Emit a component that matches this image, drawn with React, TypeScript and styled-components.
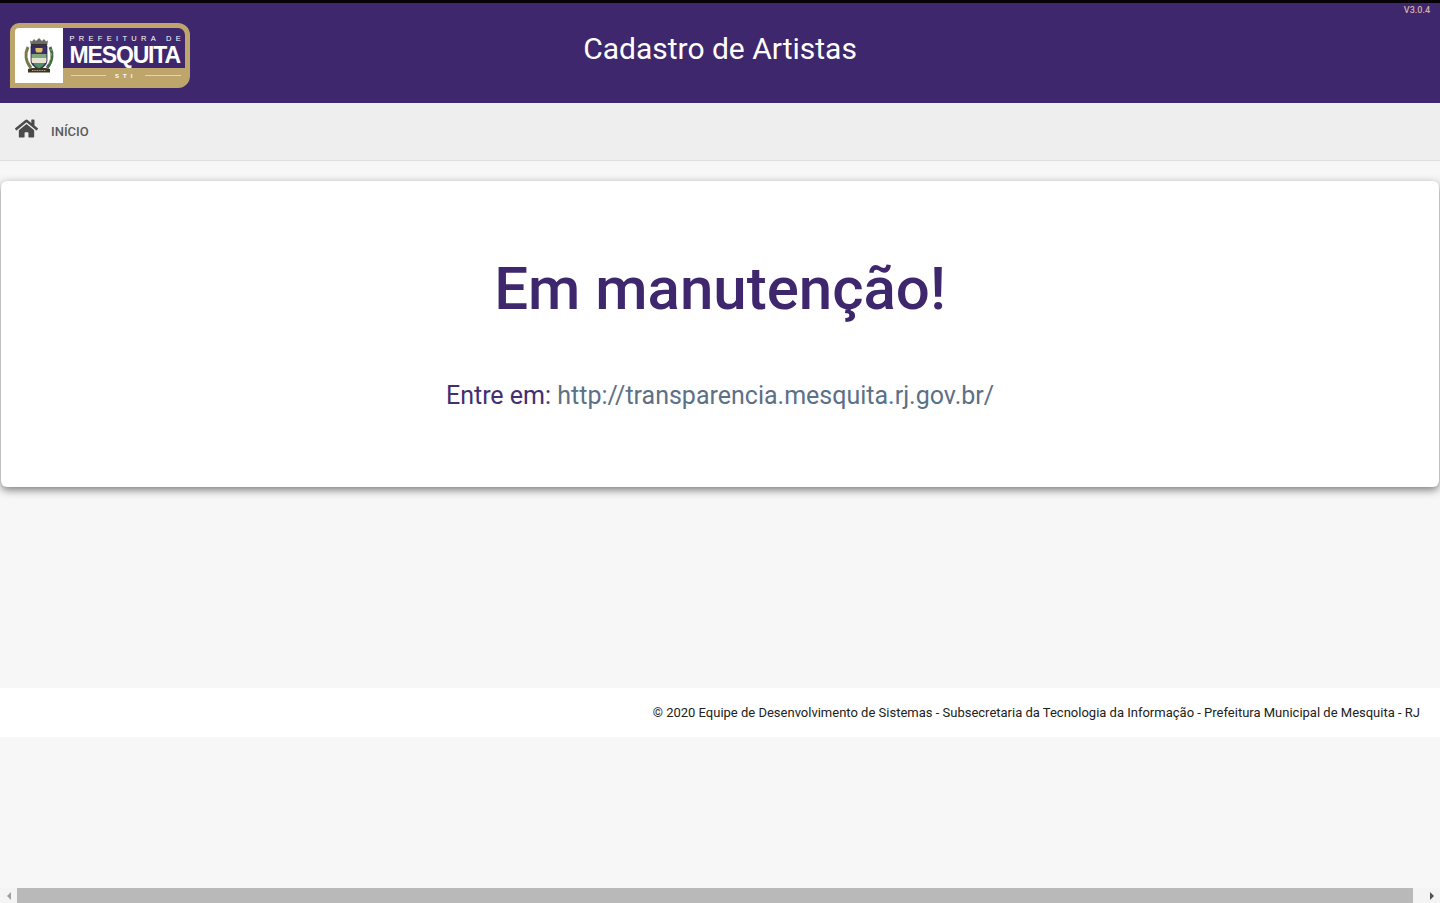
import React from 'react'
import styled, { createGlobalStyle } from 'styled-components'
import { FaHome } from 'react-icons/fa'

const Global = createGlobalStyle`
  html, body {
    margin: 0;
    padding: 0;
    background: #f7f7f7;
    font-family: Roboto, 'Liberation Sans', sans-serif;
    overflow: hidden;
  }
`

const Page = styled.div`
  display: flex;
  flex-direction: column;
  height: 903px;
  box-sizing: border-box;
`

const Header = styled.header`
  position: relative;
  display: flex;
  align-items: center;
  justify-content: center;
  height: 100px;
  flex-shrink: 0;
  border-top: 3px solid #060308;
  background: #3e276c;
`

const Version = styled.span`
  position: absolute;
  top: 2px;
  right: 10px;
  color: #d8b0a8;
  font-size: 9px;
  font-weight: 500;
`

const Title = styled.h1`
  margin: 0 0 8px;
  color: #fff;
  font-size: 30px;
  font-weight: 400;
  line-height: 36px;
`

const Logo = styled.div`
  position: absolute;
  left: 10px;
  top: 20px;
  display: flex;
  width: 180px;
  height: 65px;
  box-sizing: border-box;
  border: 5px solid #bea56c;
  border-radius: 9px 12px 12px 0;
  overflow: hidden;
  background: #bea56c;
`

const Crest = styled.div`
  display: flex;
  align-items: center;
  justify-content: center;
  width: 48px;
  background: #fff;
`

const LogoBody = styled.div`
  display: flex;
  flex: 1;
  flex-direction: column;
`

const LogoTop = styled.div`
  display: flex;
  flex-direction: column;
  height: 40px;
  box-sizing: border-box;
  padding: 7px 0 0 7px;
  background: #3e276c;
  color: #fff;
`

const LogoSmall = styled.span`
  font-family: 'Liberation Sans', sans-serif;
  font-size: 7.5px;
  line-height: 8px;
  letter-spacing: 4.3px;
  white-space: nowrap;
`

const LogoBig = styled.span`
  font-family: 'Liberation Sans', sans-serif;
  font-size: 23px;
  font-weight: 700;
  line-height: 24px;
  letter-spacing: -1.15px;
  white-space: nowrap;
`

const LogoBottom = styled.div`
  display: flex;
  flex: 1;
  align-items: center;
  gap: 9px;
  padding: 0 4px 0 8px;
  color: #fff;
  font-family: 'Liberation Sans', sans-serif;
  font-size: 6px;
  font-weight: 700;
  letter-spacing: 4px;
`

const LogoRule = styled.i`
  flex: 1;
  height: 1px;
  background: #e4d6ac;
`

const Nav = styled.nav`
  display: flex;
  align-items: center;
  gap: 13px;
  height: 57px;
  flex-shrink: 0;
  padding-left: 15px;
  background: #eeeeee;
  border-bottom: 1px solid #dedede;
  color: #4a4a4a;

  svg {
    margin-top: -6px;
  }
`

const NavLabel = styled.span`
  font-size: 13px;
  font-weight: 500;
  color: #5a5a5a;
`

const Card = styled.main`
  display: flex;
  flex-direction: column;
  align-items: center;
  height: 306px;
  flex-shrink: 0;
  margin: 20px 1px 0;
  box-sizing: border-box;
  background: #fff;
  border-radius: 6px;
  box-shadow: 0 3px 8px rgba(0, 0, 0, 0.5);
`

const Heading = styled.h2`
  margin: 72px 0 0;
  color: #3e276c;
  font-size: 60px;
  font-weight: 500;
  line-height: 72px;
`

const Sub = styled.p`
  margin: 56px 0 0;
  color: #432f70;
  font-size: 25px;
  line-height: 30px;
`

const SubLink = styled.a`
  color: #5c7086;
  text-decoration: none;
`

const Footer = styled.footer`
  display: flex;
  align-items: center;
  justify-content: flex-end;
  height: 49px;
  flex-shrink: 0;
  margin-top: 201px;
  padding-right: 20px;
  background: #fff;
  color: #212121;
  font-size: 13px;
`

const Spacer = styled.div`
  flex: 1;
`

const ScrollBar = styled.div`
  display: flex;
  align-items: center;
  height: 15px;
  flex-shrink: 0;
  background: #f4f4f4;
`

const ScrollArrow = styled.span<{ $dir: 'left' | 'right' }>`
  display: flex;
  align-items: center;
  justify-content: center;
  width: ${(p) => (p.$dir === 'left' ? '17px' : '27px')};
  height: 15px;
  flex-shrink: 0;

  &::before {
    content: '';
    border-top: 4px solid transparent;
    border-bottom: 4px solid transparent;
    ${(p) =>
      p.$dir === 'left'
        ? 'border-right: 4px solid #a0a0a0;'
        : 'border-left: 4px solid #505050; margin-left: 11px;'}
  }
`

const ScrollThumb = styled.div`
  flex: 1;
  height: 15px;
  background: #b9b9b9;
`

const CrestIcon = () => (
  <svg width='34' height='38' viewBox='0 0 34 38'>
    {/* mural crown */}
    <path d='M8 3.5l2 1 2-2.5 2 2 3-3 3 3 2-2 2 2.5 2-1-1 6H9z' fill='#6f6a66' />
    <path d='M9 7h16v1.500H9z' fill='#2f2c2c' />
    {/* wreath */}
    <path d='M6 10c-3 6-3 14 3 21' stroke='#6b7f48' strokeWidth='3' fill='none' />
    <path d='M28 10c3 6 3 14-3 21' stroke='#3f6d4a' strokeWidth='3' fill='none' />
    <path d='M5 12c-1 5 0 11 3 16' stroke='#b8584a' strokeWidth='1' strokeDasharray='2 2.500' fill='none' />
    <path d='M29 12c1 5 0 11-3 16' stroke='#c9a83f' strokeWidth='1' strokeDasharray='2 2.500' fill='none' />
    {/* shield */}
    <path d='M9 9h16v14c0 5-4 8-8 9-4-1-8-4-8-9z' fill='#3a2f6e' stroke='#1e1a30' strokeWidth='0.7' />
    <path d='M13.500 11h7v2.500l-1 2h-5l-1-2z' fill='#e0bf62' />
    <path d='M9.500 17h15v4H9.500z' fill='#7fa97c' />
    <path d='M9.500 21h15v2c0 1-.2 2-.6 3H10.100c-.4-1-.6-2-.6-3z' fill='#e6e3d0' />
    <path d='M11 26h12c-1.300 2.500-3.500 4.500-6 5.200-2.500-.7-4.700-2.700-6-5.200z' fill='#4f8f6a' />
    {/* banner */}
    <path d='M6 32l4-1h14l4 1v3.500H6z' fill='#3d3524' />
    <path d='M10 33.500h14' stroke='#d8ceb0' strokeWidth='0.8' strokeDasharray='1 0.700' />
  </svg>
)

export default function App() {
  return (
    <Page>
      <Global />
      <Header>
        <Logo>
          <Crest>
            <CrestIcon />
          </Crest>
          <LogoBody>
            <LogoTop>
              <LogoSmall>PREFEITURA DE</LogoSmall>
              <LogoBig>MESQUITA</LogoBig>
            </LogoTop>
            <LogoBottom>
              <LogoRule />
              STI
              <LogoRule />
            </LogoBottom>
          </LogoBody>
        </Logo>
        <Title>Cadastro de Artistas</Title>
        <Version>V3.0.4</Version>
      </Header>
      <Nav>
        <FaHome size={23} />
        <NavLabel>INÍCIO</NavLabel>
      </Nav>
      <Card>
        <Heading>Em manutenção!</Heading>
        <Sub>
          Entre em: <SubLink href='#'>http://transparencia.mesquita.rj.gov.br/</SubLink>
        </Sub>
      </Card>
      <Footer>
        © 2020 Equipe de Desenvolvimento de Sistemas - Subsecretaria da Tecnologia da Informação - Prefeitura Municipal de Mesquita - RJ
      </Footer>
      <Spacer />
      <ScrollBar>
        <ScrollArrow $dir='left' />
        <ScrollThumb />
        <ScrollArrow $dir='right' />
      </ScrollBar>
    </Page>
  )
}
